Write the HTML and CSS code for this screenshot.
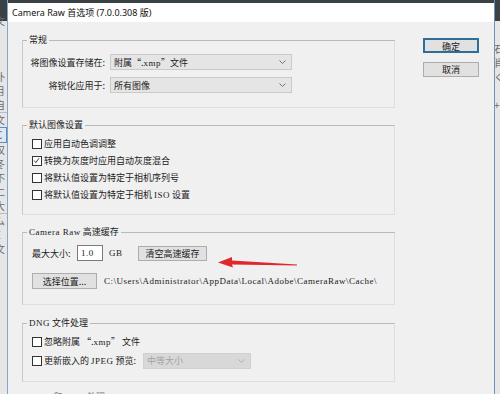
FILE: index.html
```html
<!DOCTYPE html>
<html lang="zh-CN">
<head>
    <meta charset="UTF-8">
    <title>Camera Raw 首选项</title>
    <link rel="stylesheet" href="styles.css">
</head>
<body>
    <div class="screen">
        <div class="app-left">
            <div class="glyphs">
                <div class="g-gap"></div>
                <div>文</div>
                <div class="g-gap"></div>
                <div class="g-gap"></div>
                <div class="g-gap"></div>
                <div>补</div>
                <div>月</div>
                <div>自</div>
                <div class="g-sep">文</div>
                <div class="g-sel">C</div>
                <div>汉</div>
                <div>冬</div>
                <div>不</div>
                <div>仁</div>
                <div>大</div>
                <div class="g-sep">ム</div>
                <div>E</div>
                <div>文</div>
            </div>
        </div>

        <div class="dialog">
            <div class="titlebar">Camera Raw 首选项 (7.0.0.308 版)</div>

            <div class="dialog-body">
                <div class="groups">
                    <fieldset class="group group-general">
                        <legend>常规</legend>
                        <div class="form-grid">
                            <label>将图像设置存储在:</label>
                            <div class="select">
                                <span>附属“.<span class="latin">xmp</span>”文件</span>
                                <svg class="chevron" viewBox="0 0 7 4"><polyline points="0.5,0.5 3.5,3.5 6.5,0.5"/></svg>
                            </div>
                            <label>将锐化应用于:</label>
                            <div class="select">
                                <span>所有图像</span>
                                <svg class="chevron" viewBox="0 0 7 4"><polyline points="0.5,0.5 3.5,3.5 6.5,0.5"/></svg>
                            </div>
                        </div>
                    </fieldset>

                    <fieldset class="group group-defaults">
                        <legend>默认图像设置</legend>
                        <div class="check-row"><span class="checkbox"></span><span>应用自动色调调整</span></div>
                        <div class="check-row"><span class="checkbox"><svg viewBox="0 0 10 10"><polyline points="1.5,4.5 3.5,7 7.5,1.5"/></svg></span><span>转换为灰度时应用自动灰度混合</span></div>
                        <div class="check-row"><span class="checkbox"></span><span>将默认值设置为特定于相机序列号</span></div>
                        <div class="check-row"><span class="checkbox"></span><span>将默认值设置为特定于相机 <span class="latin">ISO</span> 设置</span></div>
                    </fieldset>

                    <fieldset class="group group-cache">
                        <legend><span class="latin">Camera Raw</span> 高速缓存</legend>
                        <div class="cache-row">
                            <span class="cache-label">最大大小:</span>
                            <span class="text-input latin">1.0</span>
                            <span class="unit latin">GB</span>
                            <button class="btn btn-purge">清空高速缓存</button>
                        </div>
                        <div class="cache-row">
                            <button class="btn btn-location">选择位置...</button>
                            <span class="path latin">C:\Users\Administrator\AppData\Local\Adobe\CameraRaw\Cache\</span>
                        </div>
                    </fieldset>

                    <fieldset class="group group-dng">
                        <legend><span class="latin">DNG</span> 文件处理</legend>
                        <div class="check-row"><span class="checkbox"></span><span>忽略附属 “.<span class="latin">xmp</span>” 文件</span></div>
                        <div class="check-row">
                            <span class="checkbox"></span>
                            <span>更新嵌入的 <span class="latin">JPEG</span> 预览:</span>
                            <div class="select select-disabled">
                                <span>中等大小</span>
                                <svg class="chevron" viewBox="0 0 7 4"><polyline points="0.5,0.5 3.5,3.5 6.5,0.5"/></svg>
                            </div>
                        </div>
                    </fieldset>

                    <fieldset class="group group-jpeg">
                        <legend><span class="latin">JPEG</span> 和 <span class="latin">TIFF</span> 处理</legend>
                    </fieldset>
                </div>

                <div class="actions">
                    <button class="btn btn-default">确定</button>
                    <button class="btn">取消</button>
                </div>
            </div>
        </div>

        <div class="app-right">
            <div class="glyphs">
                <div class="g-gap"></div>
                <div class="g-gap"></div>
                <div class="g-gap"></div>
                <div>石</div>
                <div>肖</div>
                <div>く</div>
                <div class="g-gap"></div>
                <div>+</div>
            </div>
        </div>
    </div>

    <!-- red annotation arrow drawn over the dialog -->
    <svg class="annotation" viewBox="0 0 95 22">
        <polygon points="8,12.5 22,7 22,10.5 87,14.5 87,15.5 22,14.5 23,17.5"/>
    </svg>
</body>
</html>
```

FILE: styles.css
```css
* {
    box-sizing: border-box;
}
body {
    margin: 0;
    width: 500px;
    height: 394px;
    overflow: hidden;
    position: relative;
    font-family: "Noto Sans CJK SC", "Noto Sans", sans-serif;
    font-size: 9px;
    color: #1b1b1b;
}
.latin {
    font-family: "Liberation Serif", "Noto Sans CJK SC", serif;
    letter-spacing: 0.5px;
}
.screen {
    display: flex;
    height: 394px;
    background: linear-gradient(#3b4246 0, #3b4246 21px, #e6e6e6 21px);
}

/* background application peeking out at the sides */
.app-left {
    width: 8px;
    border-right: 1px solid #86a6c9;
    overflow: hidden;
}
.app-right {
    flex: 1;
    border-left: 1px solid #6f92ba;
    overflow: hidden;
}
.glyphs {
    font-size: 10px;
    line-height: 14px;
    color: #6a6a6a;
}
.app-left .glyphs {
    margin-left: -5px;
}
.app-right .glyphs {
    margin-left: -1px;
}
.g-gap {
    height: 14px;
}
.g-sep {
    border-top: 1px solid #bbb;
}
.g-sel {
    border: 1px solid #5b8fc4;
    background: #dde8f4;
}

.dialog {
    width: 486px;
    margin-top: 3px;
    background: #f0f0f0;
    display: flex;
    flex-direction: column;
}
.titlebar {
    height: 19px;
    line-height: 19px;
    padding-left: 4px;
    background: #fff;
    font-family: "Noto Sans", "Noto Sans CJK SC", sans-serif;
    font-size: 9px;
    color: #111;
}
.dialog-body {
    display: flex;
    gap: 28px;
    padding: 12px 0 0 14px;
}
.groups {
    width: 373px;
    display: flex;
    flex-direction: column;
    gap: 11px;
}
.group {
    margin: 0;
    min-width: 0;
    padding: 0 0 0 9px;
    border: 1px solid #dedede;
    border-top-color: #b9b9b9;
    border-left-color: #c9c9c9;
}
.group legend {
    margin-left: -5px;
    padding: 0 2px;
    line-height: 12px;
    font-size: 9px;
}

.form-grid {
    display: grid;
    grid-template-columns: 78px 182px;
    grid-auto-rows: 16px;
    column-gap: 5px;
    row-gap: 7px;
    align-items: center;
    margin-left: -5px;
}
.form-grid label {
    text-align: right;
    white-space: nowrap;
}
.group-general {
    padding-top: 8px;
    padding-bottom: 14px;
}
.select {
    height: 16px;
    display: flex;
    align-items: center;
    justify-content: space-between;
    padding: 0 5px 0 3px;
    background: #e5e5e5;
    border: 1px solid #cacaca;
    white-space: nowrap;
}
.chevron {
    width: 7px;
    height: 4px;
    fill: none;
    stroke: #707070;
    stroke-width: 1;
}
.select-disabled {
    width: 108px;
    margin-left: 7px;
    background: #d8d8d8;
    border-color: #d0d0d0;
    color: #a3a3a3;
}
.select-disabled .chevron {
    stroke: #b0b0b0;
}

.group-defaults {
    padding-top: 4px;
    padding-bottom: 11px;
}
.check-row {
    height: 17px;
    display: flex;
    align-items: center;
    white-space: nowrap;
}
.checkbox {
    width: 10px;
    height: 10px;
    margin-right: 2px;
    border: 1px solid #333;
    background: #fff;
    display: flex;
}
.checkbox svg {
    width: 8px;
    height: 8px;
    fill: none;
    stroke: #333;
    stroke-width: 1.2;
}

.group-cache {
    padding-top: 7px;
    padding-bottom: 15px;
}
.cache-row {
    height: 16px;
    display: flex;
    align-items: center;
    white-space: nowrap;
}
.cache-row + .cache-row {
    margin-top: 12px;
}
.cache-label {
    width: 45px;
}
.text-input {
    width: 26px;
    height: 16px;
    line-height: 14px;
    padding-left: 3px;
    background: #fff;
    border: 1px solid #7a7a7a;
}
.unit {
    margin-left: 6px;
    width: 29px;
}
.path {
    margin-left: 7px;
}
.btn {
    font-family: "Noto Sans CJK SC", "Noto Sans", sans-serif;
    font-size: 9px;
    color: #1b1b1b;
    padding: 0;
    height: 15px;
    background: #e1e1e1;
    border: 1px solid #adadad;
}
.btn-purge {
    width: 69px;
}
.btn-location {
    width: 65px;
    height: 16px;
}

.group-dng {
    margin-top: 1px;
    padding-top: 4px;
    padding-bottom: 12px;
}
.group-dng .check-row + .check-row {
    margin-top: 2px;
}
.group-jpeg {
    margin-top: -2px;
    height: 20px;
}
.group-jpeg legend {
    color: #777;
}

.actions {
    width: 56px;
    display: flex;
    flex-direction: column;
    gap: 9px;
    padding-top: 4px;
}
.btn-default {
    border: 2px solid #2f6e9c;
}

.annotation {
    position: absolute;
    left: 210px;
    top: 250px;
    width: 95px;
    height: 22px;
    fill: #e0282b;
}
```
